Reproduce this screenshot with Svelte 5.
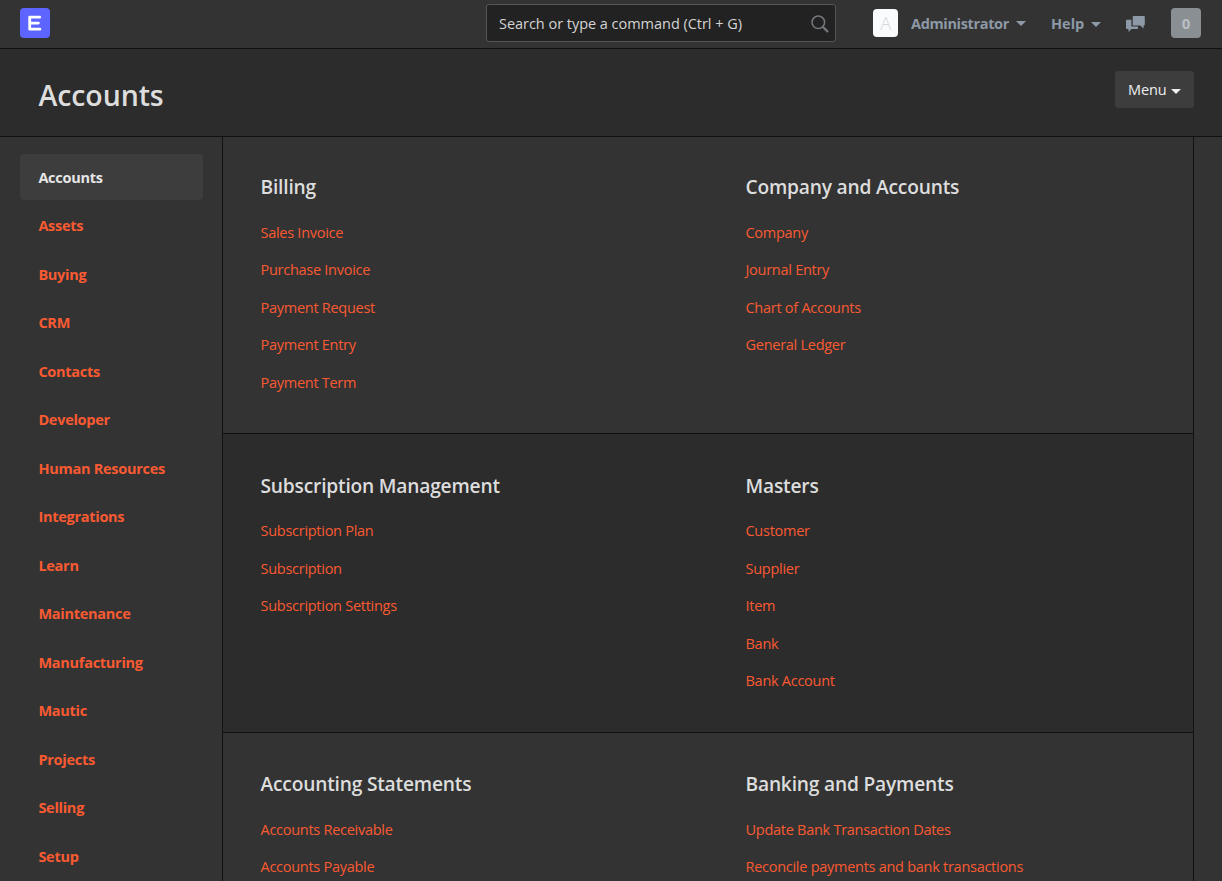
<script>
  const modules = [
    'Accounts', 'Assets', 'Buying', 'CRM', 'Contacts', 'Developer', 'Human Resources',
    'Integrations', 'Learn', 'Maintenance', 'Manufacturing', 'Mautic', 'Projects', 'Selling', 'Setup'
  ];
  const sections = [
    [
      { title: 'Billing', links: ['Sales Invoice', 'Purchase Invoice', 'Payment Request', 'Payment Entry', 'Payment Term'] },
      { title: 'Company and Accounts', links: ['Company', 'Journal Entry', 'Chart of Accounts', 'General Ledger'] }
    ],
    [
      { title: 'Subscription Management', links: ['Subscription Plan', 'Subscription', 'Subscription Settings'] },
      { title: 'Masters', links: ['Customer', 'Supplier', 'Item', 'Bank', 'Bank Account'] }
    ],
    [
      { title: 'Accounting Statements', links: ['Accounts Receivable', 'Accounts Payable'] },
      { title: 'Banking and Payments', links: ['Update Bank Transaction Dates', 'Reconcile payments and bank transactions'] }
    ]
  ];
  let active = $state('Accounts');
</script>

<div class="app">
  <nav class="navbar">
    <div class="logo">
      <svg width="30" height="30" viewBox="0 0 30 30">
        <rect width="30" height="30" rx="4" fill="#5e64ff" />
        <path d="M19.7 9.2H9.7V21.2H19.9M9.7 15.1H18.4" fill="none" stroke="#fff" stroke-width="2.8" stroke-linecap="round" stroke-linejoin="round" />
      </svg>
    </div>
    <div class="search">
      <span>Search or type a command (Ctrl + G)</span>
      <svg width="18" height="18" viewBox="0 0 18 18" fill="none" stroke="#74787c">
        <circle cx="7.3" cy="7.3" r="6.3" stroke-width="1.5" />
        <path d="M12 12L16.4 16.4" stroke-width="2.2" stroke-linecap="round" />
      </svg>
    </div>
    <div class="avatar">A</div>
    <div class="user">Administrator</div>
    <i class="caret c1"></i>
    <div class="help">Help</div>
    <i class="caret c2"></i>
    <svg class="chat" width="19" height="17" viewBox="0 0 19 17" fill="#8d99a6">
      <path d="M7.5 0H18Q18.8 0 18.8 .8V8.6Q18.8 9.4 18 9.4H17.6V12.4L14.3 9.4H6.7V.8Q6.7 0 7.5 0Z" />
      <path d="M5.4 3.7V10.6H12V12.3Q12 13.1 11.2 13.1H5.6L2.5 16.1V13.1H.8Q0 13.1 0 12.3V4.5Q0 3.7 .8 3.7Z" />
    </svg>
    <div class="count">0</div>
  </nav>

  <header class="head">
    <h1>Accounts</h1>
    <button class="menu"><span>Menu</span><i class="caret light"></i></button>
  </header>

  <div class="body">
    <aside>
      {#each modules as m}
        <button class="module" class:active={m === active} onclick={() => (active = m)}><span>{m}</span></button>
      {/each}
    </aside>
    <main>
      {#each sections as cols}
        <section>
          {#each cols as col}
            <div class="col">
              <h2>{col.title}</h2>
              {#each col.links as link}
                <div class="link"><span>{link}</span></div>
              {/each}
            </div>
          {/each}
        </section>
      {/each}
    </main>
  </div>
</div>

<style>
  :global(body) { margin: 0; background: #333; overflow: hidden; }
  .app {
    width: 1222px; height: 881px; overflow: hidden; box-sizing: border-box;
    display: flex; flex-direction: column; background: #333; color: #ddd;
    font-family: "Open Sans", "Noto Sans", sans-serif; font-size: 14.5px; letter-spacing: -0.27px; white-space: nowrap;
  }
  .navbar {
    box-sizing: border-box; height: 49px; flex: none; border-bottom: 1px solid #111;
    display: flex; align-items: center; padding: 0 21px 2px 20px;
  }
  .navbar > * { flex: none; }
  .logo { display: flex; margin-right: 436px; }
  .search {
    box-sizing: border-box; width: 350px; height: 38px; border: 1px solid #555; border-radius: 3px;
    background: #222; color: #d4d4d4; display: flex; align-items: center; justify-content: space-between;
    padding: 0 6px 0 12px; margin-right: 37px; letter-spacing: -0.03px;
  }
  .search svg { display: block; margin-top: 1px; }
  .avatar {
    width: 25px; height: 28px; border-radius: 4px; background: #fafbfc; color: #d1d8dd;
    display: flex; align-items: center; justify-content: center; font-size: 18px; font-weight: 300; margin-right: 13px;
  }
  .user, .help { color: #8d99a6; font-weight: 700; }
  .user { width: 105px; letter-spacing: -0.35px; }
  .help { width: 40px; letter-spacing: 0; }
  .caret {
    width: 0; height: 0; border: 5px solid transparent; border-top-color: #8d99a6; border-bottom: 0;
  }
  .c1 { margin-right: 25px; }
  .c2 { margin: 3px 25px 0 0; }
  .chat { margin: 2px 26px 0 0; }
  .count {
    width: 30px; height: 30px; border-radius: 4px; background: #8a8f94; color: #b9bec3;
    display: flex; align-items: center; justify-content: center; font-weight: 700; font-size: 15px;
  }
  .head {
    box-sizing: border-box; height: 88px; flex: none; background: #2c2c2c; border-bottom: 1px solid #111;
    display: flex; justify-content: space-between; align-items: flex-start; padding: 21px 28px 0 38.5px;
  }
  h1 { margin: 0; font-size: 28.5px; line-height: 50px; font-weight: 600; letter-spacing: -0.1px; color: #ddd; }
  .menu {
    width: 79px; height: 37px; border: 0; border-radius: 3px; background: #3d3d3d; color: #eee; font: inherit;
    margin-top: 1px; padding: 0 13px; display: flex; align-items: center; justify-content: space-between; letter-spacing: -0.1px;
  }
  .light { border-top-color: #eee; margin-top: 3px; }
  .body { display: flex; flex: 1; min-height: 0; }
  aside {
    box-sizing: border-box; width: 222px; flex: none; padding: 17px 19px 0 20px;
    display: flex; flex-direction: column; gap: 2.5px;
  }
  .module {
    height: 46px; flex: none; border: 0; border-radius: 4px; background: none; color: #f95a32; text-align: left;
    font: inherit; letter-spacing: inherit; font-weight: 700; padding: 0 0 0 18.4px;
  }
  .module.active { background: #3d3d3d; color: #e6e6e6; }
  main {
    box-sizing: border-box; width: 972px; border: 0 solid #111; border-width: 0 1px;
  }
  section {
    box-sizing: border-box; height: 299px; border-bottom: 1px solid #111;
    display: grid; grid-template-columns: 485px 485px; padding: 38px 0 0 37.5px;
  }
  section:first-child { height: 297px; padding-top: 37px; }
  section:nth-child(even) { background: #2c2c2c; padding-top: 38.5px; }
  h2 { margin: 0 0 14px; font-size: 19.2px; line-height: 26px; font-weight: 600; letter-spacing: -0.2px; color: #ddd; }
  .link { height: 37.5px; line-height: 37.5px; color: #f95a32; }
  h2 + .link { margin-top: -0.5px; }
</style>
